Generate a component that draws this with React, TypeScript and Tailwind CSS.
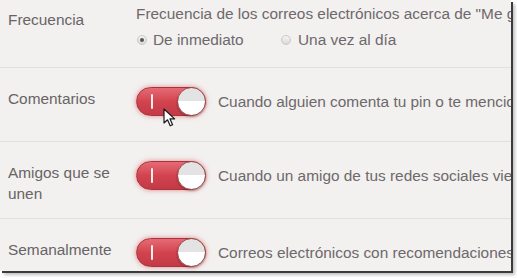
function Cursor() {
    return (
        <svg className="absolute left-[26px] top-[20px]" width="13" height="19" viewBox="0 0 13 19">
            <path
                d="M1 1 L1 15 L4.5 11.8 L7.2 17.8 L9.6 16.8 L7 10.9 L11.6 10.9 Z"
                fill="white"
                stroke="#1a1a1a"
                strokeWidth="1.2"
                strokeLinejoin="round"
            />
        </svg>
    );
}

function Toggle({ cursor }: { cursor?: boolean }) {
    return (
        <div className="relative shrink-0 w-[70px] h-[29px] rounded-full border border-[#a8323d] bg-gradient-to-b from-[#e56b74] via-[#d2434f] to-[#c23a46] shadow-[0_0_5px_rgba(220,90,90,0.7)]">
            <div className="absolute left-[14px] top-[6px] w-[2px] h-[15px] bg-white/90 rounded-sm" />
            <div className="absolute right-[-1px] top-[-1px] w-[29px] h-[29px] rounded-full border border-[#9b4a48] bg-gradient-to-b from-[#e3e3e3] from-50% to-white to-50% shadow-[0_1px_2px_rgba(0,0,0,0.3)]" />
            {cursor && <Cursor />}
        </div>
    );
}

function Radio({ checked }: { checked?: boolean }) {
    return (
        <span className="inline-flex items-center justify-center w-[10px] h-[10px] rounded-full border border-[#c8c8c8] bg-gradient-to-b from-[#f4f4f4] to-[#d9d9d9]">
            {checked && <span className="w-[4px] h-[4px] rounded-full bg-[#555]" />}
        </span>
    );
}

const rows = [
    { label: "Comentarios", text: "Cuando alguien comenta tu pin o te menciona en un comentario", cursor: true, h: "h-[74px]" },
    { label: "Amigos que se unen", text: "Cuando un amigo de tus redes sociales viene a Pinterest", h: "h-[77px]" },
    { label: "Semanalmente", text: "Correos electrónicos con recomendaciones de pines y tableros", h: "h-[60px]", last: true },
];

export default function App() {
    return (
        <div className="w-[517px] h-[278px] bg-white font-['Liberation_Sans'] text-[15.4px]">
            <div className="w-[511px] h-[271px] overflow-hidden bg-[#f2f1f0] shadow-[2px_2px_0_#3b3b3b,4px_4px_3px_rgba(0,0,0,0.25)]">
                <div className="flex h-[68px] border-b border-[#e2e0de] whitespace-nowrap">
                    <div className="w-[136px] shrink-0 pl-2 pt-[9px] leading-[22px] text-[#686465]">Frecuencia</div>
                    <div className="pt-[3px] text-[#6e686b]">
                        <div className="leading-[22px]">Frecuencia de los correos electrónicos acerca de "Me gusta"</div>
                        <div className="flex items-center mt-[4px] leading-[22px]">
                            <span className="flex items-center gap-[6px] w-[145px] pl-[1px]">
                                <Radio checked />
                                <span>De inmediato</span>
                            </span>
                            <span className="flex items-center gap-[7px]">
                                <Radio />
                                <span>Una vez al día</span>
                            </span>
                        </div>
                    </div>
                </div>
                {rows.map((r) => (
                    <div key={r.label} className={`flex ${r.h} ${r.last ? "" : "border-b border-[#e2e0de]"}`}>
                        <div className="w-[136px] shrink-0 pl-2 pr-2 pt-[20px] leading-[21px] text-[#686465]">{r.label}</div>
                        <div className="flex items-start gap-3 pt-[19px] whitespace-nowrap text-[#6e686b]">
                            <Toggle cursor={r.cursor} />
                            <span className="leading-[29px]">{r.text}</span>
                        </div>
                    </div>
                ))}
            </div>
        </div>
    );
}
